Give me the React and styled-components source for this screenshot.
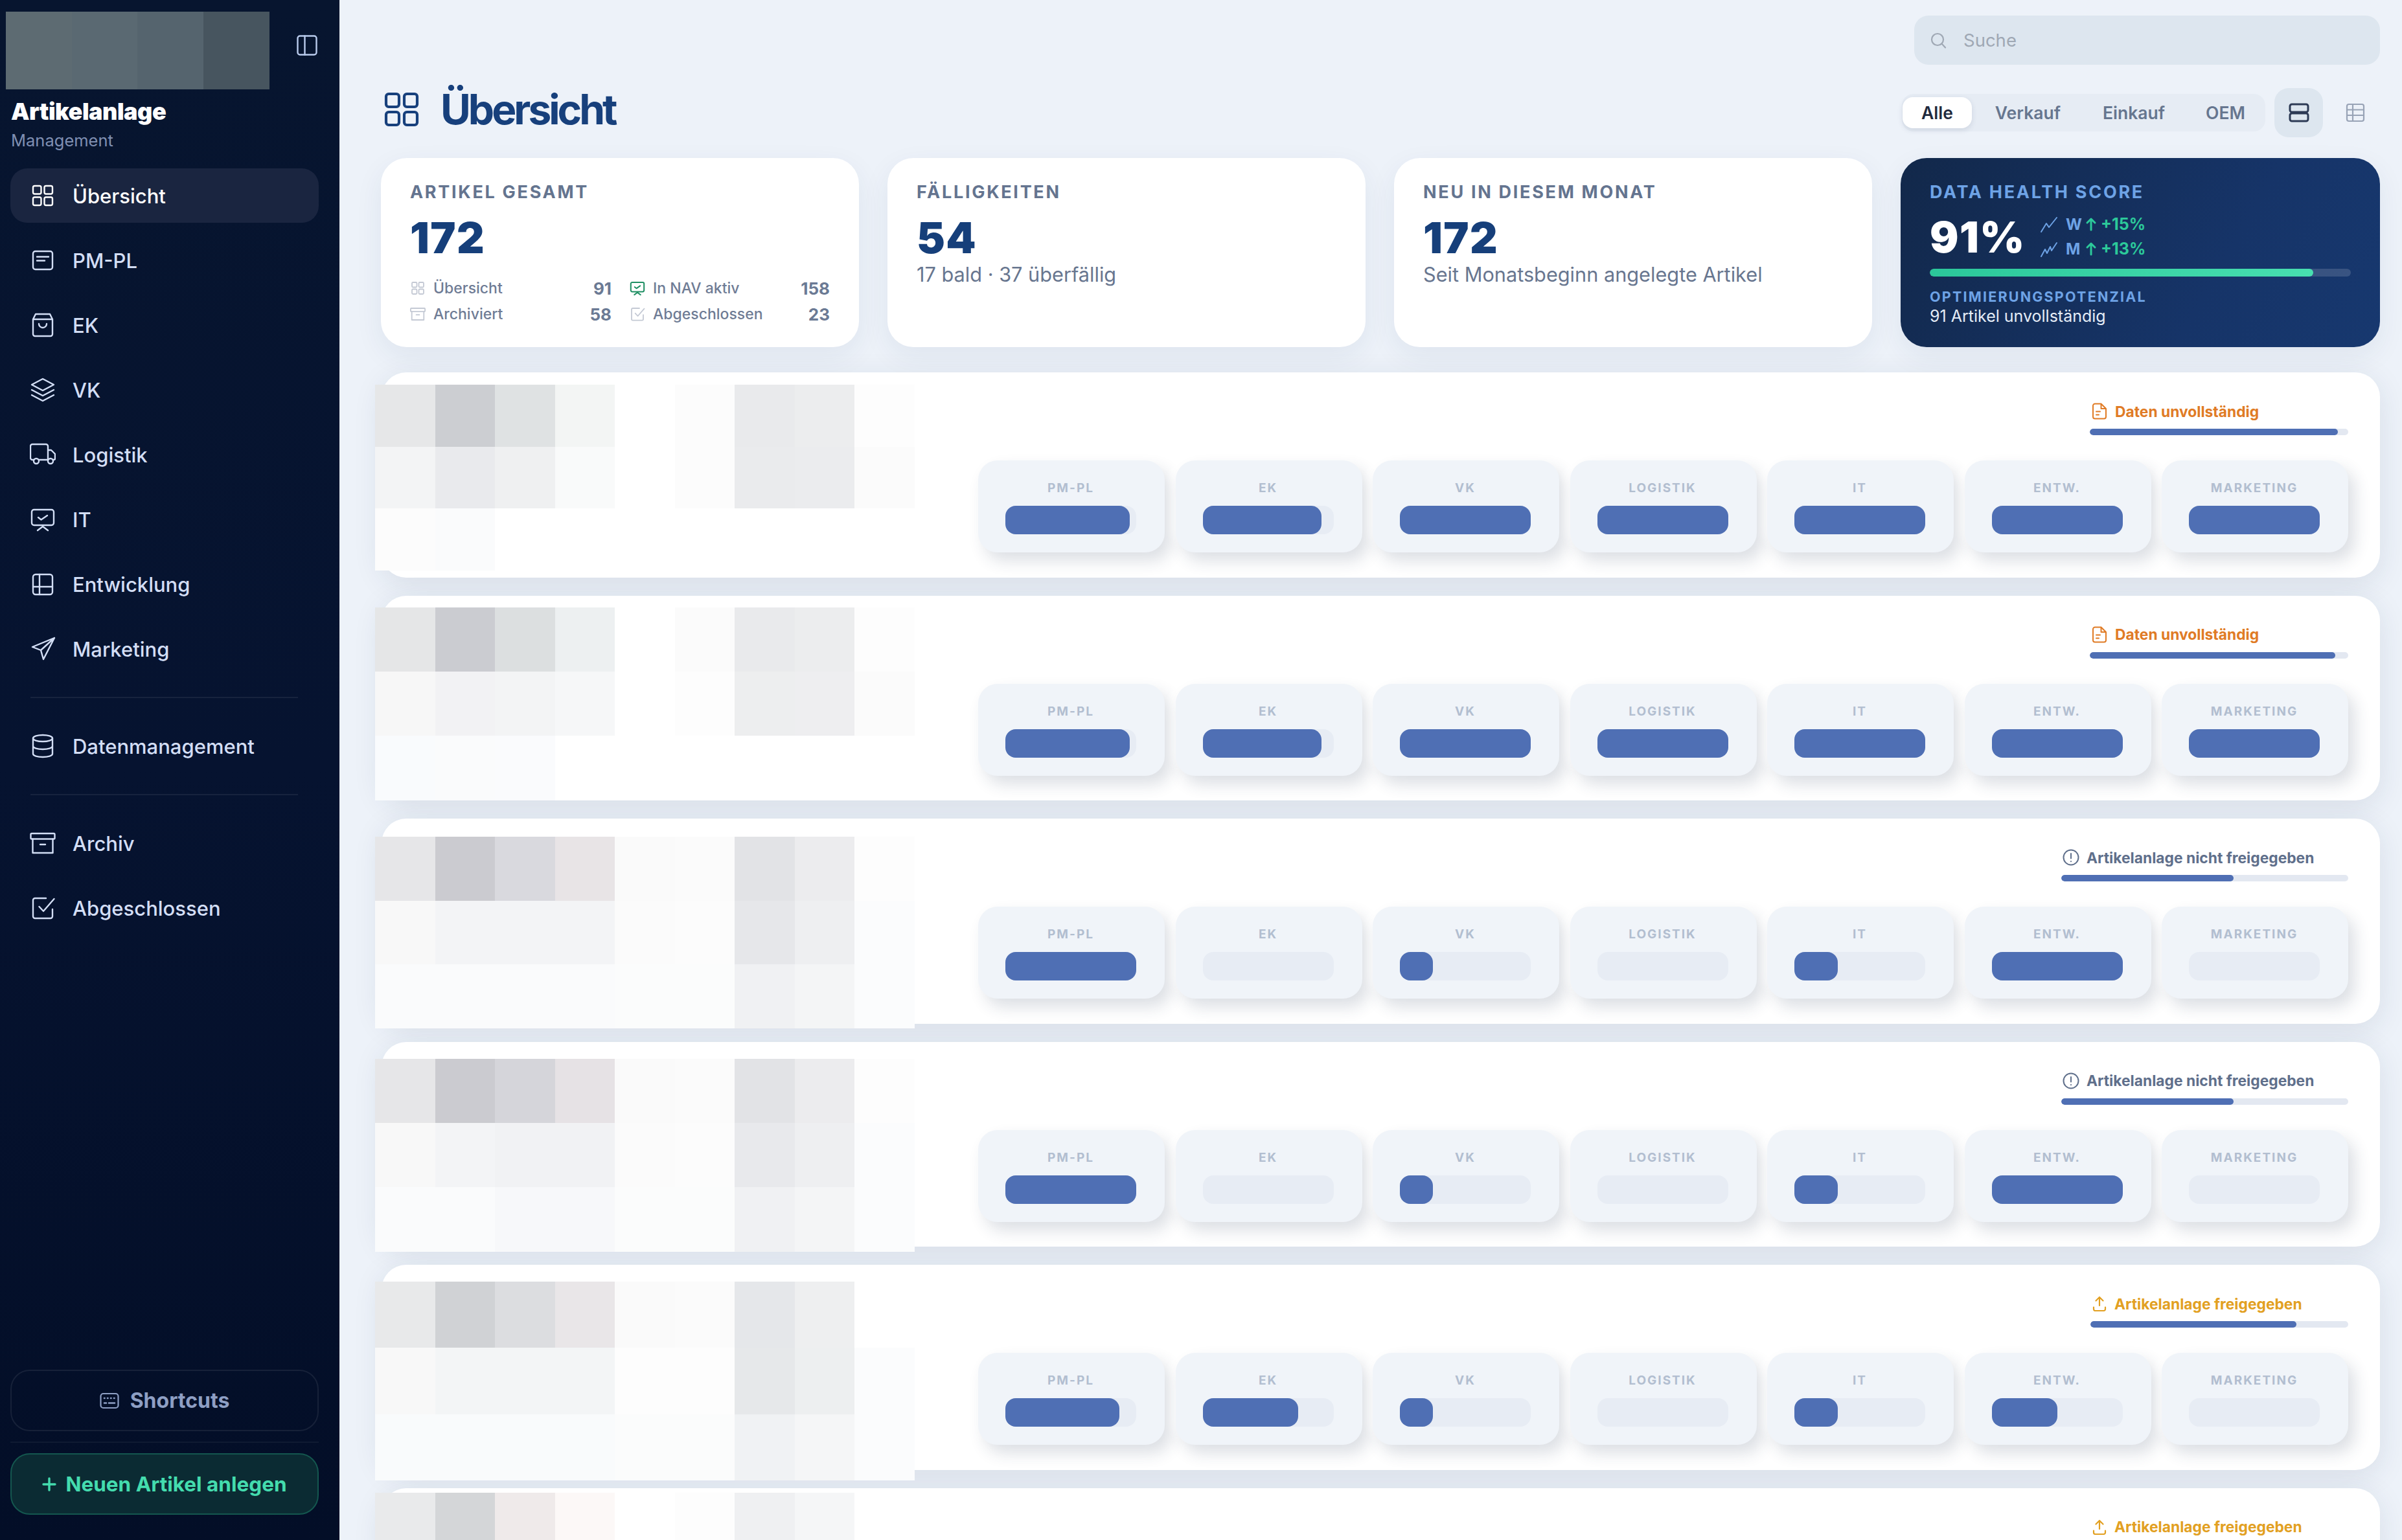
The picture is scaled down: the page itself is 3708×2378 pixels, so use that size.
import React from "react";
import styled, { createGlobalStyle } from "styled-components";

const Global = createGlobalStyle`
  html, body { margin: 0; padding: 0; width: 100%; height: 100%; overflow: hidden; }
  body { font-family: Inter, "Noto Sans", "Liberation Sans", sans-serif; background: #edf2f9; -webkit-font-smoothing: antialiased; }
  #root { height: 100%; }
  * { box-sizing: border-box; }
`;

const Shell = styled.div`display: flex; height: 100vh; overflow: hidden;`;

const Sidebar = styled.aside`
  width: 524px; flex: none; display: flex; flex-direction: column; padding: 18px 32px 39px 16px;
  background: linear-gradient(180deg, #07152f 0%, #061330 50%, #030e27 100%);
`;
const SideTop = styled.div`display: flex; align-items: flex-start; justify-content: space-between; margin-left: -7px; margin-right: 2px;`;
const LogoBlur = styled.div`
  width: 407px; height: 120px;
  background: linear-gradient(90deg, #5d6b72 0 25%, #5a6972 25% 50%, #55646e 50% 75%, #47555f 75%);
`;
const PanelBtn = styled.div`margin-top: 36px; width: 32px; height: 32px; color: #b9cbed; display: flex;`;
const BrandTitle = styled.div`margin: 12px 0 0 1px; font-size: 36px; line-height: 44px; font-weight: 900; color: #fff; letter-spacing: -0.5px;`;
const BrandSub = styled.div`margin: 6px 0 0 1px; font-size: 25.500px; line-height: 34px; color: #7f8fb2;`;
const Nav = styled.nav`margin: 26px 0 0 0; display: flex; flex-direction: column; gap: 16px;`;
const NavItem = styled.div`
  display: flex; align-items: center; gap: 26px; height: 84px; padding-left: 30px; border-radius: 26px;
  font-size: 31px; font-weight: ${p => (p.$active ? 500 : 450)}; color: ${p => (p.$active ? "#fff" : "#d3def5")};
  background: ${p => (p.$active ? "#1a2540" : "transparent")};
`;
const NavDivider = styled.div`height: 2px; margin: 16px 32px 16px 31px; background: rgba(255,255,255,.07);`;
const SideBottom = styled.div`margin-top: auto; display: flex; flex-direction: column;`;
const ShortcutBtn = styled.div`
  height: 95px; border: 2px solid rgba(255,255,255,.08); border-radius: 30px; display: flex; align-items: center; justify-content: center; gap: 17px;
  font-size: 32px; font-weight: 650; color: #8e9fc4;
`;
const SideRule = styled.div`height: 2px; margin: 16px 0; background: rgba(255,255,255,.05);`;
const NewBtn = styled.div`
  height: 95px; border: 2px solid #14574f; border-radius: 30px; background: #0b2b33; display: flex; align-items: center; justify-content: center; gap: 14px;
  font-size: 31.500px; font-weight: 650; color: #44dcae;
`;

const Main = styled.main`flex: 1; min-width: 0; padding: 24px 34px 0 62px; display: flex; flex-direction: column;`;
const SearchRow = styled.div`display: flex; justify-content: flex-end;`;
const Search = styled.div`
  width: 719px; height: 76px; border-radius: 22px; background: #dde6ef; display: flex; align-items: center; gap: 26px; padding-left: 25px;
  font-size: 27.500px; color: #9fa8b4;
`;
const HeaderRow = styled.div`margin-top: 36px; height: 76px; display: flex; align-items: center; justify-content: space-between;`;
const TitleWrap = styled.div`display: flex; align-items: center; gap: 28px; margin: 0 0 10px 2px; color: #17407c;`;
const Title = styled.h1`margin: 0; font-size: 64px; line-height: 76px; font-weight: 700; color: #17407c; letter-spacing: -4px;`;
const HeaderTools = styled.div`display: flex; align-items: center;`;
const Tabs = styled.div`width: 561px; height: 58px; border-radius: 18px; background: #e6ecf4; display: flex; align-items: center; padding: 0 1px; margin-right: 14px;`;
const Tab = styled.div`
  height: 48px; display: flex; align-items: center; font-size: 26.500px; font-weight: 600; border-radius: 16px;
  color: ${p => (p.$active ? "#1f2a3d" : "#66768f")};
  background: ${p => (p.$active ? "#fff" : "transparent")};
  box-shadow: ${p => (p.$active ? "0 3px 8px rgba(30,50,90,.12)" : "none")};
  padding: 0 ${p => (p.$active ? 29 : 0)}px; margin-left: ${p => p.$ml || 0}px;
`;
const ViewBtn = styled.div`
  width: 75px; height: 76px; border-radius: 22px; display: flex; align-items: center; justify-content: center;
  background: #dde6ef; color: #2d3a55;
`;
const ViewBtnPlain = styled.div`
  width: 88px; height: 76px; display: flex; align-items: center; justify-content: flex-end; padding-right: 23px; color: #98a3b6;
`;

const Cards = styled.div`margin-top: 32px; display: grid; grid-template-columns: repeat(4, 1fr); gap: 44px; margin-left: 2px;`;
const Card = styled.section`
  height: 292px; border-radius: 40px; padding: 36px 45px 0; background: #fff; box-shadow: 0 14px 44px rgba(25,55,105,.07);
`;
const ScoreCard = styled(Card)`background: linear-gradient(120deg, #12284a 0%, #163468 65%, #17386f 100%); color: #fff;`;
const CardLabel = styled.div`font-size: 27px; line-height: 34px; font-weight: 700; letter-spacing: 2.700px; color: ${p => p.$c || "#64748f"};`;
const CardValue = styled.div`margin-top: 15px; font-size: 66px; line-height: 76px; font-weight: 900; letter-spacing: 1.400px; color: #163f7a;`;
const CardNote = styled.div`margin-top: -1px; font-size: 30.700px; line-height: 40px; color: #68768f;`;
const StatGrid = styled.div`margin-top: 25px; display: grid; grid-template-columns: 311px 309px; column-gap: 28px; row-gap: 10px;`;
const Stat = styled.div`display: flex; align-items: center; height: 30px; font-size: 23px; font-weight: 500; color: #6f7c95;`;
const StatIcon = styled.span`display: flex; width: 36px; flex: none; color: ${p => p.$c || "#c4c9d4"};`;
const StatNum = styled.b`margin-left: auto; font-size: 26px; font-weight: 700; color: #6b7a94;`;
const ScoreLine = styled.div`margin-top: 14px; display: flex; align-items: center; height: 76px;`;
const ScoreNum = styled.div`font-size: 66px; line-height: 76px; font-weight: 900; color: #fff; letter-spacing: 1.400px; width: 170px;`;
const Trends = styled.div`display: flex; flex-direction: column; gap: 10px; margin-top: -2px;`;
const Trend = styled.div`display: flex; align-items: center; height: 28px; font-size: 25px; font-weight: 700; color: #2cc99a;`;
const TrendIcon = styled.span`display: flex; color: #6ea3e6;`;
const TrendKey = styled.span`color: #6ea3e6; width: 28px; margin-left: 12px; font-size: 24px;`;
const TrendArrow = styled.span`display: flex; margin-right: 4px;`;
const ScoreTrack = styled.div`margin-top: 11px; height: 12px; width: 650px; border-radius: 6px; background: rgba(255,255,255,.15); overflow: hidden;`;
const ScoreFill = styled.div`height: 100%; border-radius: 6px; background: linear-gradient(90deg, #2bc79a, #48dfb0);`;
const ScoreCaption = styled.div`margin-top: 17px; font-size: 21.500px; line-height: 28px; font-weight: 700; letter-spacing: 2.200px; color: #6ea3e6;`;
const ScoreText = styled.div`margin-top: 1px; font-size: 25px; line-height: 30px; color: #e4ecf6;`;

const Rows = styled.div`margin-top: 39px; margin-left: 3px; display: flex; flex-direction: column; gap: 28px;`;
const Row = styled.article`
  position: relative; flex: none; height: 316.500px; border-radius: 38px; background: #fff; padding: 45px 49px 0 0;
  box-shadow: 0 10px 46px rgba(30,45,80,.10); display: flex; flex-direction: column; align-items: flex-end;
`;
const Mosaic = styled.div`
  position: absolute; left: -10px; top: ${p => p.$top}px; width: 833px; height: ${p => p.$h}px; z-index: 1;
  display: grid; grid-template-columns: repeat(9, 1fr); grid-template-rows: repeat(3, 1fr);
`;
const MosaicCell = styled.div`background: ${p => p.$c};`;
const StatusBlock = styled.div`width: ${p => p.$w}px;`;
const StatusLine = styled.div`display: flex; align-items: center; gap: 11px; height: 30px; padding-left: 2px; font-size: 22.800px; font-weight: 700; color: ${p => p.$c};`;
const StatusTrack = styled.div`margin-top: 12px; height: 10px; border-radius: 5px; background: #e3e8f1; overflow: hidden;`;
const StatusFill = styled.div`height: 100%; border-radius: 5px; background: #4f6fb4;`;
const Tiles = styled.div`margin-top: 39px; display: flex; gap: 16.500px;`;
const Tile = styled.div`
  width: 288px; height: 142px; border-radius: 30px; background: #f0f4f9; padding: 29px 44px 0 42px;
  box-shadow: 10px 13px 24px rgba(40,55,85,.16), -5px -6px 14px rgba(255,255,255,.9);
`;
const TileLabel = styled.div`text-align: center; font-size: 19px; line-height: 28px; font-weight: 700; letter-spacing: 2px; color: #b2bed0;`;
const TileTrack = styled.div`margin-top: 13px; height: 44px; border-radius: 16px; background: #e7ecf4;`;
const TileFill = styled.div`height: 100%; border-radius: 16px; background: #4f6fb4;`;

const Svg = ({ s = 40, vb = 40, sw = 2.4, children }) => (
  <svg width={s} height={s} viewBox={`0 0 ${vb} ${vb}`} fill="none" stroke="currentColor" strokeWidth={sw} strokeLinecap="round" strokeLinejoin="round" style={{ flex: "none", display: "block" }}>{children}</svg>
);
const IGrid = p => <Svg {...p}><rect x="5" y="5" width="12.500" height="12.500" rx="2.500"/><rect x="22.500" y="5" width="12.500" height="12.500" rx="2.500"/><rect x="5" y="22.500" width="12.500" height="12.500" rx="2.500"/><rect x="22.500" y="22.500" width="12.500" height="12.500" rx="2.500"/></Svg>;
const ICard = p => <Svg {...p}><rect x="5" y="6" width="30" height="28" rx="3.500"/><path d="M11 14.500H29M11 20.500H23"/></Svg>;
const IBag = p => <Svg {...p}><path d="M9 3H31L35 11V34a3 3 0 0 1-3 3H8a3 3 0 0 1-3-3V11ZM5 11H35M14 18a6 6 0 0 0 12 0"/></Svg>;
const ILayers = p => <Svg {...p}><path d="M20 3 37 12 20 21 3 12ZM3 20l17 9 17-9M3 28l17 9 17-9"/></Svg>;
const ITruck = p => <Svg {...p}><path d="M6 28H4a3 3 0 0 1-3-3V7a3 3 0 0 1 3-3h21a3 3 0 0 1 3 3v21H14M28 13h5l6 6v7a2 2 0 0 1-2 2h-1M28 28h-1"/><circle cx="10" cy="30" r="4"/><circle cx="32" cy="30" r="4"/></Svg>;
const IMonitor = p => <Svg {...p}><rect x="3" y="5" width="34" height="24" rx="3.500"/><path d="M13 17l4.500 3.500L27 14M12 37l8-6 8 6"/></Svg>;
const ILayout = p => <Svg {...p}><rect x="5" y="5" width="30" height="31" rx="4"/><path d="M15 5V36M5 24H35"/></Svg>;
const ISend = p => <Svg {...p}><path d="M38 3 4 17l13 5 4 14ZM17 22 38 3"/></Svg>;
const IDb = p => <Svg {...p}><ellipse cx="20" cy="8" rx="15" ry="5"/><path d="M5 8V32c0 3 6.700 5 15 5s15-2 15-5V8M5 20c0 3 6.700 5 15 5s15-2 15-5"/></Svg>;
const IArchive = p => <Svg {...p}><rect x="1.500" y="5" width="37" height="8.500" rx="1.500"/><path d="M4.500 13.500V35H35.500V13.500M16 22H24"/></Svg>;
const ICheck = p => <Svg {...p}><path d="M25 5H8A3 3 0 0 0 5 8V33a3 3 0 0 0 3 3H32a3 3 0 0 0 3-3V22M14.500 18l6.500 7L37.500 6"/></Svg>;
const IPanel = () => <Svg s={32} vb={32} sw={2.4}><rect x="1.500" y="1.500" width="29" height="29" rx="3.500"/><path d="M12.500 1.500V30.500"/></Svg>;
const IKeyboard = () => <Svg s={30} vb={30} sw={2.2}><rect x="1.500" y="4" width="27" height="22" rx="4"/><path d="M7 11h.5M12 11h.5M17 11h.5M22 11h.5M7 18.500h3M14 18.500h9" strokeWidth="2.600"/></Svg>;
const IPlus = () => <Svg s={22} vb={22} sw={3.400}><path d="M11 2V20M2 11H20"/></Svg>;
const ISearch = () => <Svg s={25} vb={25} sw={2.2}><circle cx="11" cy="11" r="9"/><path d="M18 18l5 5.500"/></Svg>;
const IRows = () => <Svg s={32} vb={32} sw={3}><rect x="2" y="3" width="28" height="12" rx="3"/><rect x="2" y="17" width="28" height="12" rx="3"/></Svg>;
const ITable = () => <Svg s={30} vb={30} sw={2.2}><rect x="2" y="2" width="26" height="26" rx="3"/><path d="M2 10.500H28M2 19H28M11 2V28"/></Svg>;
const ITrend1 = () => <Svg s={28} vb={28} sw={2}><path d="M2 26 10 13l4 6L26 4"/></Svg>;
const ITrend2 = () => <Svg s={28} vb={28} sw={2}><path d="M2 26 8 15l3 6 5-10 2 6L26 5"/></Svg>;
const IArrowUp = () => <Svg s={22} vb={22} sw={3}><path d="M11 20V3M5 9l6-6 6 6"/></Svg>;
const IDoc = () => <Svg s={26} vb={26} sw={2}><path d="M15.500 1.500H6A3 3 0 0 0 3 4.500V21.500a3 3 0 0 0 3 3H20a3 3 0 0 0 3-3V9ZM15.500 1.500V9H23M8 13.500h6M8 18.500h4"/></Svg>;
const IAlert = () => <Svg s={26} vb={26} sw={2}><circle cx="13" cy="13" r="11.500"/><path d="M13 7V14.500M13 19v.2"/></Svg>;
const IUpload = () => <Svg s={24} vb={24} sw={2.2}><path d="M12 15V2M6.500 7.500 12 2l5.500 5.500M3 17.500V20.500a2.500 2.500 0 0 0 2.500 2.500H18.500a2.500 2.500 0 0 0 2.500-2.500V17.500"/></Svg>;

const navTop = [["Übersicht", IGrid], ["PM-PL", ICard], ["EK", IBag], ["VK", ILayers], ["Logistik", ITruck], ["IT", IMonitor], ["Entwicklung", ILayout], ["Marketing", ISend]];

const labels = ["PM-PL", "EK", "VK", "LOGISTIK", "IT", "ENTW.", "MARKETING"];
const DATEN = { icon: IDoc, c: "#e07b25", text: "Daten unvollständig", w: 399 };
const NICHT = { icon: IAlert, c: "#5f6f8b", text: "Artikelanlage nicht freigegeben", w: 443 };
const FREI = { icon: IUpload, c: "#e2a022", text: "Artikelanlage freigegeben", w: 398 };

const W = "#ffffff";
const rows = [
  { st: DATEN, pct: 96, top: 19, h: 287, fills: [95, 91, 100, 100, 100, 100, 100], m: [
    "#e6e7e8","#ccced2","#dfe2e3","#f3f5f4",W,"#fcfcfc","#e9eaec","#ecedee","#fdfdfd",
    "#f3f4f5","#e9eaed","#eff0f1","#f9fafa",W,"#fcfcfc","#eaebed","#ebecee","#fbfbfb",
    "#fcfcfc","#fafbfc",W,W,W,W,W,W,W] },
  { st: DATEN, pct: 95, top: 18, h: 298, fills: [95, 91, 100, 100, 100, 100, 100], m: [
    "#e5e6e7","#cbccd1","#dcdfe0","#edf0f1",W,"#fbfbfb","#e9eaec","#ecedee","#fdfdfd",
    "#f7f7f7","#f2f2f4","#f3f4f5","#f6f7f8",W,"#fdfdfd","#edeeef","#eeeef0","#fbfbfb",
    "#f9fbfd","#fafbfc","#fafbfd",W,W,W,W,W,W] },
  { st: NICHT, pct: 60, top: 28, h: 296, fills: [100, 0, 25, 0, 33, 100, 0], m: [
    "#e6e6e8","#cbcbd0","#d9d9de","#e8e4e6","#fafafa","#fbfbfb","#e2e3e6","#ececee","#fdfdfd",
    "#f8f8f8","#f3f4f6","#f3f4f6","#f3f4f6","#fbfbfb","#fcfcfc","#e6e7ea","#eeeff1","#fbfcfd",
    "#fafbfc","#fafbfc","#fafbfc","#fafbfc","#fbfcfc","#fbfcfc","#f0f1f3","#f4f5f6","#fbfcfd"] },
  { st: NICHT, pct: 60, top: 26, h: 298, fills: [100, 0, 25, 0, 33, 100, 0], m: [
    "#e6e6e8","#cbcbd0","#d5d5da","#e6e2e5","#fafafa","#fbfbfb","#e2e3e6","#ececee","#fdfdfd",
    "#f8f8f8","#f3f4f6","#f1f2f4","#f1f2f4","#fbfbfb","#fcfcfc","#e8e9ec","#eeeff1","#fbfcfd",
    "#fafbfc","#fafbfc","#f7f8fa","#f7f8fa","#fbfcfc","#fbfcfc","#f0f1f3","#f4f5f6","#fbfcfd"] },
  { st: FREI, pct: 80, top: 26, h: 307, fills: [87, 73, 25, 0, 33, 50, 0], m: [
    "#e8e9ea","#d0d2d5","#dcdde0","#e9e6e8","#fafafa","#fbfbfb","#e5e7ea","#eeeff0",W,
    "#f8f8f8","#f3f5f6","#f3f5f6","#f3f5f6","#fdfdfd","#fdfdfd","#e6e8ea","#edeff0","#fbfcfd",
    "#f9fbfc","#f9fbfc","#f9fbfc","#f9fbfc","#fbfcfc","#fbfcfc","#f0f2f4","#f5f6f7","#fbfcfd"] },
  { st: FREI, pct: 80, top: 7, h: 307, offscreen: true, fills: [], m: [
    "#e9eaeb","#d4d6d8","#efeaea","#fcf8f7",W,"#fdfdfd","#eff0f2","#f5f6f7",W,
    "#f8f8f8","#f3f5f6","#f3f5f6","#f3f5f6","#fdfdfd","#fdfdfd","#e6e8ea","#edeff0","#fbfcfd",
    "#f9fbfc","#f9fbfc","#f9fbfc","#f9fbfc","#fbfcfc","#fbfcfc","#f0f2f4","#f5f6f7","#fbfcfd"] },
];

const ItemRow = ({ r }) => {
  const I = r.st.icon;
  return (
    <Row>
      <Mosaic $top={r.top} $h={r.h}>{r.m.map((c, i) => <MosaicCell key={i} $c={c} />)}</Mosaic>
      <StatusBlock $w={r.st.w}>
        <StatusLine $c={r.st.c}><I />{r.st.text}</StatusLine>
        <StatusTrack><StatusFill style={{ width: `${r.pct}%` }} /></StatusTrack>
      </StatusBlock>
      {!r.offscreen && (
        <Tiles>
          {labels.map((l, i) => (
            <Tile key={l}>
              <TileLabel>{l}</TileLabel>
              <TileTrack><TileFill style={{ width: `${r.fills[i]}%` }} /></TileTrack>
            </Tile>
          ))}
        </Tiles>
      )}
    </Row>
  );
};

export default function App() {
  return (
    <Shell>
      <Global />
      <Sidebar>
        <SideTop><LogoBlur /><PanelBtn><IPanel /></PanelBtn></SideTop>
        <BrandTitle>Artikelanlage</BrandTitle>
        <BrandSub>Management</BrandSub>
        <Nav>
          {navTop.map(([t, I], i) => <NavItem key={t} $active={i === 0}><I />{t}</NavItem>)}
          <NavDivider />
          <NavItem><IDb />Datenmanagement</NavItem>
          <NavDivider />
          <NavItem><IArchive />Archiv</NavItem>
          <NavItem><ICheck />Abgeschlossen</NavItem>
        </Nav>
        <SideBottom>
          <ShortcutBtn><IKeyboard />Shortcuts</ShortcutBtn>
          <SideRule />
          <NewBtn><IPlus />Neuen Artikel anlegen</NewBtn>
        </SideBottom>
      </Sidebar>
      <Main>
        <SearchRow><Search><ISearch />Suche</Search></SearchRow>
        <HeaderRow>
          <TitleWrap><IGrid s={64} vb={40} sw={2.6} /><Title>Übersicht</Title></TitleWrap>
          <HeaderTools>
            <Tabs>
              <Tab $active>Alle</Tab>
              <Tab $ml={36}>Verkauf</Tab>
              <Tab $ml={65}>Einkauf</Tab>
              <Tab $ml={63}>OEM</Tab>
            </Tabs>
            <ViewBtn><IRows /></ViewBtn>
            <ViewBtnPlain><ITable /></ViewBtnPlain>
          </HeaderTools>
        </HeaderRow>
        <Cards>
          <Card>
            <CardLabel>ARTIKEL GESAMT</CardLabel>
            <CardValue>172</CardValue>
            <StatGrid>
              <Stat><StatIcon><IGrid s={24} sw={3} /></StatIcon>Übersicht<StatNum>91</StatNum></Stat>
              <Stat><StatIcon $c="#1f8f63"><IMonitor s={24} sw={3.400} /></StatIcon>In NAV aktiv<StatNum>158</StatNum></Stat>
              <Stat><StatIcon><IArchive s={24} sw={3} /></StatIcon>Archiviert<StatNum>58</StatNum></Stat>
              <Stat><StatIcon><ICheck s={24} sw={3} /></StatIcon>Abgeschlossen<StatNum>23</StatNum></Stat>
            </StatGrid>
          </Card>
          <Card>
            <CardLabel>FÄLLIGKEITEN</CardLabel>
            <CardValue>54</CardValue>
            <CardNote>17 bald · 37 überfällig</CardNote>
          </Card>
          <Card>
            <CardLabel>NEU IN DIESEM MONAT</CardLabel>
            <CardValue>172</CardValue>
            <CardNote>Seit Monatsbeginn angelegte Artikel</CardNote>
          </Card>
          <ScoreCard>
            <CardLabel $c="#6ea3e6">DATA HEALTH SCORE</CardLabel>
            <ScoreLine>
              <ScoreNum>91%</ScoreNum>
              <Trends>
                <Trend><TrendIcon><ITrend1 /></TrendIcon><TrendKey>W</TrendKey><TrendArrow><IArrowUp /></TrendArrow>+15%</Trend>
                <Trend><TrendIcon><ITrend2 /></TrendIcon><TrendKey>M</TrendKey><TrendArrow><IArrowUp /></TrendArrow>+13%</Trend>
              </Trends>
            </ScoreLine>
            <ScoreTrack><ScoreFill style={{ width: "91%" }} /></ScoreTrack>
            <ScoreCaption>OPTIMIERUNGSPOTENZIAL</ScoreCaption>
            <ScoreText>91 Artikel unvollständig</ScoreText>
          </ScoreCard>
        </Cards>
        <Rows>{rows.map((r, i) => <ItemRow key={i} r={r} />)}</Rows>
      </Main>
    </Shell>
  );
}
